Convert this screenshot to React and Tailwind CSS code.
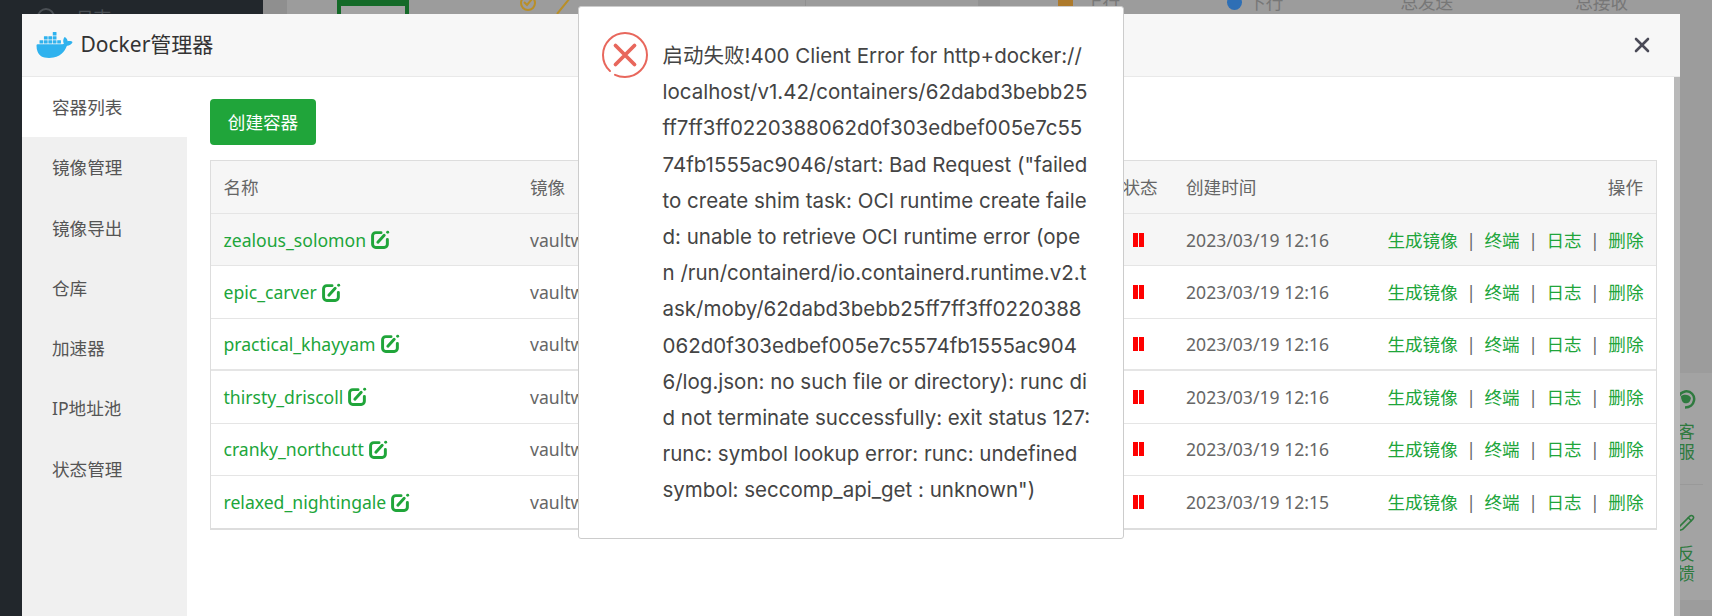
import { X, Pencil } from "lucide-react";
import { SiDocker } from "react-icons/si";

const menu = ["容器列表", "镜像管理", "镜像导出", "仓库", "加速器", "IP地址池", "状态管理"];

const rows = [
  { name: "zealous_solomon", time: "2023/03/19 12:16" },
  { name: "epic_carver", time: "2023/03/19 12:16" },
  { name: "practical_khayyam", time: "2023/03/19 12:16" },
  { name: "thirsty_driscoll", time: "2023/03/19 12:16" },
  { name: "cranky_northcutt", time: "2023/03/19 12:16" },
  { name: "relaxed_nightingale", time: "2023/03/19 12:15" },
];

const errorLines = [
  "启动失败!400 Client Error for http+docker://",
  "localhost/v1.42/containers/62dabd3bebb25",
  "ff7ff3ff0220388062d0f303edbef005e7c55",
  '74fb1555ac9046/start: Bad Request ("failed',
  "to create shim task: OCI runtime create faile",
  "d: unable to retrieve OCI runtime error (ope",
  "n /run/containerd/io.containerd.runtime.v2.t",
  "ask/moby/62dabd3bebb25ff7ff3ff0220388",
  "062d0f303edbef005e7c5574fb1555ac904",
  "6/log.json: no such file or directory): runc di",
  "d not terminate successfully: exit status 127:",
  "runc: symbol lookup error: runc: undefined",
  'symbol: seccomp_api_get : unknown")',
];

const EditIcon = () => (
  <svg viewBox="0 0 18 18" className="ml-[5px] h-[19px] w-[19px] shrink-0" fill="none" stroke="#20a53a">
    <path d="M9.5 2.5H4.5a3 3 0 0 0-3 3v8a3 3 0 0 0 3 3h8a3 3 0 0 0 3-3V9" strokeWidth="2.800" strokeLinecap="round" />
    <path d="M6.5 11.5l6-6.5" strokeWidth="2.800" strokeLinecap="round" />
    <circle cx="15.8" cy="2.2" r="1.400" fill="#20a53a" stroke="none" />
  </svg>
);

const ErrorIcon = () => (
  <svg viewBox="0 0 46 46" className="h-[46px] w-[46px] shrink-0" fill="none" stroke="#e8675c">
    <path d="M8 39C3.500 35 1 29 1 23 1 11 11 1 23 1s22 10 22 22-10 22-22 22c-3 0-7-.7-10-2.200" strokeWidth="2" strokeLinecap="round" />
    <path d="M13.500 13.500l19 19M32.500 13.500l-19 19" strokeWidth="3.800" strokeLinecap="round" />
  </svg>
);

export default function App() {
  return (
    <div className="relative h-[616px] w-[1712px] overflow-hidden bg-[#9c9c9c] font-['Noto_Sans','Noto_Sans_CJK_SC',sans-serif] text-[17.6px] text-[#666]">
      {/* page under the mask */}
      <div className="flex h-full">
        <div className="flex h-full w-[263px] shrink-0 items-start bg-[#22272c] pl-[37px] text-[#4a4f54]">
          <div className="mt-[8px] h-[18px] w-[18px] rounded-full border-2 border-[#4a4f54]" />
          <span className="ml-[21px] mt-[9px] leading-none">日志</span>
        </div>
        <div className="flex flex-1 flex-col">
          <div className="flex h-[14px] items-start overflow-hidden text-[#777]">
            <div className="h-full w-[24px] bg-[#8f8f8f]" />
            <div className="ml-[50px] h-full w-[72px] bg-[#146a28] px-[4px] pt-[6px]">
              <div className="h-full bg-[#a3a3a3]" />
            </div>
            <svg viewBox="0 0 56 14" className="ml-[108px] h-[14px] w-[56px]" fill="none" stroke="#b98f28" strokeWidth="2">
              <circle cx="11" cy="3" r="7" />
              <path d="M7 2l3 3 5-6M40 14L53-2" />
            </svg>
            <div className="ml-[232px] h-full w-px bg-[#909090]" />
            <div className="ml-[172px] h-full w-[22px] bg-[#929292]" />
            <div className="ml-[58px] h-[8px] w-[15px] bg-[#ad7a2c]" />
            <span className="ml-[12px] -mt-[6px] leading-none">上行</span>
            <div className="ml-[107px] -mt-[5px] h-[15px] w-[15px] rounded-full bg-[#2e6fb5]" />
            <span className="ml-[6px] -mt-[6px] leading-none">下行</span>
            <span className="ml-[117px] -mt-[6px] leading-none">总发送</span>
            <span className="ml-[122px] -mt-[6px] leading-none">总接收</span>
          </div>
          <div className="flex flex-1 flex-col items-end pt-[359px]">
            <div className="flex h-[227px] w-[52px] flex-col items-center bg-[#a3a3a3] pt-[17px] text-[#2f7a3f]">
              <svg viewBox="0 0 20 20" className="h-[20px] w-[20px]" fill="none" stroke="#2f7a3f" strokeWidth="2.500">
                <path d="M3 16C0 11 2 3 9 1.500c6-1 10 4 9 9-.7 4-4 7-9 7" />
                <path d="M5 6c3-2 8-2 10 2-1 5-4 6-7 5-2-1-3-4-3-7z" fill="#2f7a3f" stroke="none" />
              </svg>
              <span className="mt-[11px] leading-[20px]">客</span>
              <span className="leading-[20px]">服</span>
              <div className="mt-[23px] h-px w-[34px] bg-[#999]" />
              <Pencil size={18} className="mt-[29px]" />
              <span className="mt-[11px] leading-[20px]">反</span>
              <span className="leading-[20px]">馈</span>
            </div>
          </div>
        </div>
      </div>

      {/* docker manager layer */}
      <div className="absolute left-[21.500px] top-[13.500px] flex h-[640px] w-[1658.500px] flex-col rounded-t-[3px] bg-white">
        <div className="flex h-[63.500px] shrink-0 items-center border-b border-[#e9e9e9] bg-[#f7f7f7] pl-[14px] pr-[26px]">
          <SiDocker className="h-[36px] w-[37px] text-[#2fb2ee]" />
          <span className="ml-[8px] text-[21px] text-[#333]">Docker管理器</span>
          <X className="ml-auto h-[24px] w-[24px] text-[#4b4b57]" strokeWidth={2.600} />
        </div>
        <div className="flex min-h-0 flex-1">
          <div className="w-[165.500px] shrink-0 bg-[#f0f0f0]">
            {menu.map((item, i) => (
              <div
                key={item}
                className={`flex h-[60.300px] items-center pl-[30.500px] text-[#555] ${i === 0 ? "bg-white" : ""}`}
              >
                {item}
              </div>
            ))}
          </div>
          <div className="min-w-0 flex-1 pl-[23px] pr-[17px] pt-[22px]">
            <button className="h-[46px] w-[106px] rounded-[4px] bg-[#20a53a] text-[17.600px] text-white">创建容器</button>
            <div className="mt-[15px] border border-b-2 border-[#ddd]">
              <div className="grid h-[53px] grid-cols-[306px_592.500px_63.500px_1fr] items-center border-b border-[#e5e5e5] bg-[#f6f6f6]">
                <span className="pl-[12.500px]">名称</span>
                <span className="pl-[13px]">镜像</span>
                <span className="pl-[13px]">状态</span>
                <div className="flex justify-between pl-[13px] pr-[13px]">
                  <span>创建时间</span>
                  <span>操作</span>
                </div>
              </div>
              {rows.map((row, i) => (
                <div
                  key={row.name}
                  className={`grid h-[52.400px] grid-cols-[306px_592.500px_63.500px_1fr] items-center border-[#e5e5e5] ${i === 0 ? "bg-[#f6f6f6]" : ""} ${i === 2 ? "border-b-2" : ""} ${i !== 2 && i < rows.length - 1 ? "border-b" : ""}`}
                >
                  <div className="flex items-center pl-[12.500px] text-[#20a53a]">
                    {row.name}
                    <EditIcon />
                  </div>
                  <span className="pl-[13px]">vaultwarden/server:latest</span>
                  <div className="flex gap-px pl-[23px]">
                    <span className="h-[14px] w-[5px] bg-[#f00]" />
                    <span className="h-[14px] w-[5px] bg-[#f00]" />
                  </div>
                  <div className="flex items-center justify-between pl-[13px] pr-[12.500px]">
                    <span>{row.time}</span>
                    <div className="text-[#20a53a]">
                      生成镜像<span className="mx-[8.500px] text-[#666]">|</span>
                      终端<span className="mx-[8.500px] text-[#666]">|</span>
                      日志<span className="mx-[8.500px] text-[#666]">|</span>
                      删除
                    </div>
                  </div>
                </div>
              ))}
            </div>
          </div>
          <div className="w-[6px] shrink-0 bg-[#b9b9b9]" />
        </div>
      </div>

      {/* error dialog */}
      <div className="absolute left-[577.500px] top-[6px] flex h-[533px] w-[546.500px] rounded-[3px] border border-[#ccc] bg-white pl-[23px] pt-[25px] font-['Inter','Noto_Sans_CJK_SC',sans-serif]">
        <ErrorIcon />
        <div className="ml-[15px] whitespace-nowrap pt-[6px] text-[20.500px] leading-[36.200px] text-[#444]">
          {errorLines.map((line) => (
            <div key={line}>{line}</div>
          ))}
        </div>
      </div>
    </div>
  );
}
